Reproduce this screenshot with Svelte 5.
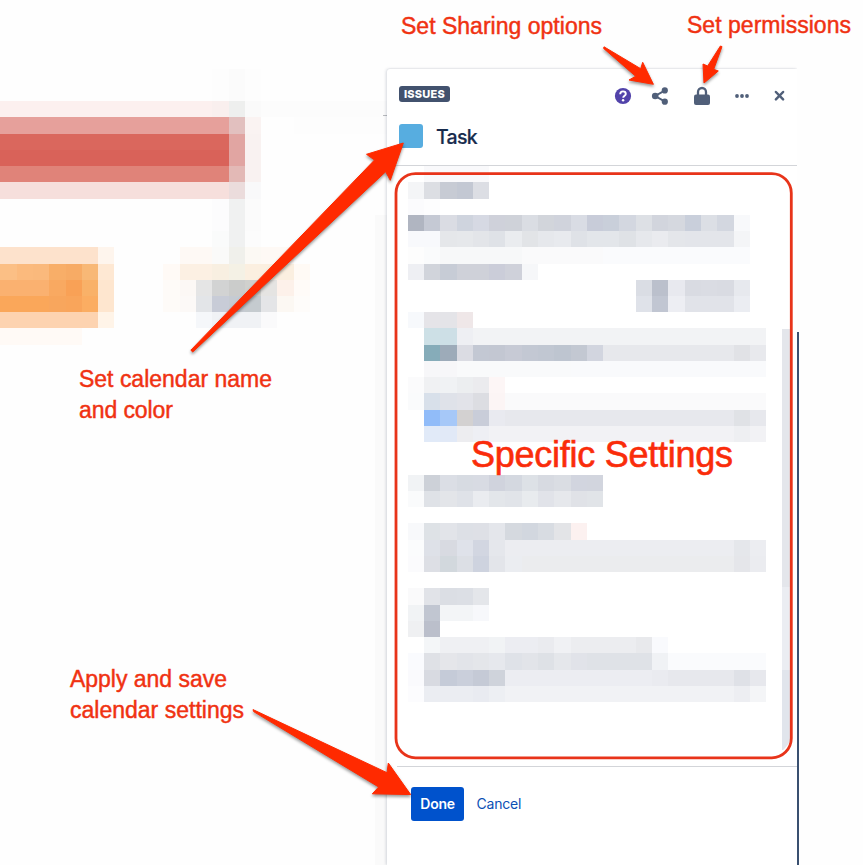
<script>
  // Pixelated cells: x edge = 407.7 + 16.29 * column, y edge = 182.3 + 16.24 * row.
  // Each entry is [row, first column, "colour colour*span ..."].
  const rows = [
    [-7, -12, 'fdfdfd fbfbfb fdfdfd'],
    [-6, -12, 'fdfdfd fbfbfb fdfdfd'],
    [-5, -26, 'fcf0ef*14 f9efee eeefee fafafa fcfcfc*8'],
    [-4, -26, 'e6a09b*15 e2c0bf faf3f2 fefefe*2 fdfdfd*6'],
    [-3, -26, 'da675d*15 e1a5a2 f9f2f1'],
    [-2, -26, 'd96259*15 e1a5a2 f9f2f1'],
    [-1, -26, 'e08379*15 e3b9b6 f9f2f1'],
    [0, -26, 'f6dfdc*15 ebdcdc f9f9fa'],
    [1, -13, 'fefefe fcfcfd f0f1f1 fbfbfb'],
    [2, -12, 'fcfcfd f0f1f1 fbfbfb'],
    [3, -12, 'fafbfb f0f1f1 fcfcfc'],
    [4, -26, 'fde2cc*7 fef5ed fefefe*4 fef9f5*2 fafaf9 f0f0eb fcf9f4 fef9f5*2'],
    [5, -26, 'fbbf85*2 fbba7d fab97c f8ae68 f7ab65 f8b876 fee8d3 fefefe*3 fffaf6 fcf0e3*2 f8efe1 f4f1e5 fbefe0*3 fffaf5'],
    [6, -26, 'fab170*4 f9a961 f9a156 f9b168 fee6cf fefefe*3 fefbf8 fcf8f5 e5e5e5 d2d3d3 cbcccb d0d0cd e5e4e2 fdf1ea fffbf8'],
    [7, -26, 'faa75a*4 f8a65d f9a55b fbad62 fee6cf fefefe*3 fefbf8 fcf9f7 e3e5e8 c8ccd7 c6cbd2 c5cbcf e4e5e7 fcf8f3 fefcfa'],
    [8, -26, 'fdd3b0*7 fff4e8 fefefe*5 f5f7fa f0f2f5*3 fafafb'],
    [9, -26, 'fffaf6*6'],

    [-1, 1, 'f9f9fb*4'],
    [0, 0, 'f4f5f7 dcdee3 c7cbd4 c3c8d3 dcdee4'],
    [1, 0, 'fbfbfd fdfdfe'],
    [2, 0, 'b0b5c1 c5c9d4 dadce3 cfd4de d6d9e3 cfd1da cfd2d9 dadde3 d2d5db d0d3dc d9dce4 c8ccd9 c9cfda d3d7e0 dde0e5 d2d5dd d5d8df c9cfdb dcdfe5 d3d7e0 f8f9fb'],
    [3, 0, 'f8f9fc*2 e5e7ea e6e8eb e3e5e9 dfe2e7 eaecef e2e4e7 e6e8ec e8eaee dfe2e7 e3e6ea*2 dfe2e6 e6e8ec eaebef e4e6ea e3e5ea*3 f4f5f7'],
    [4, 0, 'fdfdfd fafbfc f7f8f9*5 fafafb*5 fafbfd*9'],
    [5, 0, 'eeeff3 d1d4db c7ccd6 cfd1d9*2 cbcdd9 cfd1da f6f7f9'],
    [6, 14, 'dadde4 bbc0cc e8e9ef d9dbe2 dadce3 d9dbe2 e7e9ee'],
    [7, 14, 'dfe2e9 c1c6d2 edeef3 e1e3e9*3 ebedf2'],
    [8, 0, 'f7f9fc e5e4e8 e4e4e8 efe7e8'],
    [9, 1, 'cde0e6 cddfe6 eeeff3 f2f3f5*18'],
    [10, 1, '86acb9 9dabb9 dbdce3 c3c8d3 c3c7d2 c7cad5 c3c8d3 c1c7d2 bec5d0 c3c8d2 d2d5df e7e8ec*8 e1e2e6 e8e9ed'],
    [11, 1, 'f7f7f9*2 f9fafb*7 f9fafc*12'],
    [12, 0, 'fbfbfc f0f1f3 f0f2f4 eceef0 ebebee fdf6f6'],
    [13, 0, 'fafbfc d8e0ea dfe2e9 e2e3e9 dcdde2 fcf5f5 fafafb*16'],
    [14, 1, '91bcf9 a6c8f8 d3d1d1 c9cdd9 e9eaf0 e7e8ed*14 e0e2e6 e7e8ed'],
    [15, 1, 'e1eaf8 e1e9f7 ededf0 eeeff4 f2f2f5*15 eeeff2 f2f2f5'],
    [18, 0, 'f1f3f5 cdd1d8 dbdee5 d7dbe2 d8dbe3 d0d3dd d4d8e0 dde1e6 d7dae1 dadde3 d2d5df d2d5de'],
    [19, 0, 'fafbfc dfe2e7 e3e5e9 dfe2e8 eaecf0 e3e6ea e1e4e9 e8ebee e1e3e9 e6e8ec e0e2e7 e1e4e8'],
    [21, 0, 'f8f9fb dee2e6 e2e4e9 dde0e6 dee0e6 e4e6eb d5d9df d2d7df d8dce2 e3e4e7 fcf1f0'],
    [22, 0, 'fbfcfd dee1e8 d8dae1 dfe2ea d2d6e1 e5e7ec ecedf1*14 e5e7eb ecedf1'],
    [23, 0, 'fbfbfd dddfe5 d2d8dd dcdfe5 ced3df e3e5ea ebedf1 ebecee*13 e5e6ea ebecf0'],
    [25, 0, 'fafafb e1e3e8 dbdee4 dcdfe5 e4e6ea'],
    [26, 0, 'f1f3f5 c1c6d1 f3f5f7*2 f7f8fb'],
    [27, 0, 'eff0f2 bbbfcb'],
    [28, 1, 'f4f6f8 eff0f3*3 f1f3f5 ecedf2*2 eaebef f0f1f4 ecedf0*4 e8e9ec f9fafd'],
    [29, 0, 'fafbfe dfe1e6 e5e6ea e2e4e9 e4e6ea e6e8ed dfe2e8 e2e4e9 dee1e6 e5e7eb e1e3e9 dfe2e7*4 f0f2f5 fafbfd*6'],
    [30, 0, 'fafafd d8dae1 c5cbd8 cacfdb c5cad6 cfd3db ecedf2*9 eaebf0 e7e8ed*4 dfe1e7 e7e8ed'],
    [31, 0, 'fcfcfe ebedf2*3 e9ebf1 edeff3 f1f2f5*14 edeef2 f4f5f7']
  ];

  const px = (c) => Math.round(407.7 + 16.29 * c);
  const py = (r) => Math.round(182.3 + 16.24 * r);

  const cells = rows.flatMap(([r, start, spec]) => {
    let c = start;
    return spec.split(' ').map((part) => {
      const [color, n = 1] = part.split('*');
      const x = px(c);
      c += Number(n);
      return { x, y: py(r), w: px(c) - x, h: py(r + 1) - py(r), fill: '#' + color };
    });
  });
  const timeline = cells.filter((c) => c.x < 387);
  const settings = cells.filter((c) => c.x >= 387);

  const arrows = [
    '190.8,350.2 374.5,160 366.5,154.3 403.3,143 390.3,180.3 385.7,171.7 192.8,351.9',
    '253,709.6 387,772.7 388.3,763 410.7,794.6 372.3,793.8 378.7,787 253.6,711.6',
    '604,46.8 640.7,68.7 642.7,62.3 653.4,84.3 629,80 635.7,76.3 603.6,48.4',
    '720.4,46 722,46.6 713.7,69.3 718.3,71 704,83 703,64 707.7,66'
  ];

  const notes = [
    { x: 401, y: 34, w: 201, text: 'Set Sharing options' },
    { x: 687, y: 33, w: 164, text: 'Set permissions' },
    { x: 79, y: 387, w: 193, text: 'Set calendar name' },
    { x: 79, y: 418, w: 94, text: 'and color' },
    { x: 70, y: 687, w: 157, text: 'Apply and save' },
    { x: 70, y: 718, w: 174, text: 'calendar settings' }
  ];
</script>

<div class="page">
  <svg class="layer" width="863" height="865" shape-rendering="crispEdges" aria-hidden="true">
    <rect x="375" y="215" width="12" height="650" fill="#fafafa" />
    {#each timeline as c}
      <rect x={c.x} y={c.y} width={c.w} height={c.h} fill={c.fill} />
    {/each}
    <rect x="383" y="115" width="4" height="1" fill="#b9bbbf" />
    <rect x="797" y="332" width="2" height="533" fill="#3a5070" />
  </svg>

  <aside class="panel">
    <header>
      <div class="top">
        <span class="lozenge">ISSUES</span>
        <div class="actions">
          <svg width="18" height="18" viewBox="0 0 18 18">
            <circle cx="9" cy="9" r="8.1" fill="#5243aa" />
            <path d="M6.2 7.3C6.2 5.4 7.4 4.4 9 4.4s2.8 1 2.8 2.5c0 1.8-2.6 1.9-2.6 3.9" fill="none" stroke="#fff" stroke-width="1.9" />
            <circle cx="9.1" cy="13.2" r="1.2" fill="#fff" />
          </svg>
          <svg width="18" height="18" viewBox="0 0 18 18" fill="#505f79">
            <path d="M13.6 3.6 4.2 9l9.4 5.4" fill="none" stroke="#505f79" stroke-width="2" />
            <circle cx="13.8" cy="3.4" r="3.1" />
            <circle cx="4.2" cy="9" r="3.3" />
            <circle cx="13.8" cy="14.7" r="3.1" />
          </svg>
          <svg width="18" height="20" viewBox="0 0 18 20">
            <path d="M5 9V6a4 4 0 0 1 8 0V9" fill="none" stroke="#505f79" stroke-width="2.3" />
            <rect x="1" y="8.6" width="16" height="10.4" rx="2" fill="#505f79" />
          </svg>
          <svg width="16" height="6" viewBox="0 0 16 6" fill="#505f79">
            <circle cx="3" cy="3" r="1.9" /><circle cx="8" cy="3" r="1.9" /><circle cx="13" cy="3" r="1.9" />
          </svg>
          <svg width="12" height="12" viewBox="0 0 12 12">
            <path d="m2.9 2 7.2 7.4m0-7.4L2.9 9.4" stroke="#505f79" stroke-width="2.5" stroke-linecap="round" />
          </svg>
        </div>
      </div>
      <div class="title"><span class="swatch"></span><span class="name">Task</span></div>
    </header>
    <div class="body"></div>
    <footer>
      <button class="done">Done</button>
      <button class="cancel">Cancel</button>
    </footer>
  </aside>

  <svg class="layer" width="863" height="865">
    <g shape-rendering="crispEdges">
      {#each settings as c}
        <rect x={c.x} y={c.y} width={c.w} height={c.h} fill={c.fill} />
      {/each}
      <rect x="782" y="329" width="10" height="258" fill="#e4e6eb" />
      <rect x="782" y="587" width="10" height="83" fill="#ebedf2" />
      <rect x="782" y="670" width="10" height="80" fill="#e1e5ec" />
    </g>
    <path d="M782 751q6-5 10-13v17h-10z" fill="#fff" />
    <rect x="396" y="173.6" width="395.3" height="584.2" rx="19.5" fill="none" stroke="#e8341a" stroke-width="2.8" />
    <g class="arrows">
      {#each arrows as points}
        <polygon {points} />
      {/each}
    </g>
    {#each notes as n}
      <text x={n.x} y={n.y} textLength={n.w} font-size="23">{n.text}</text>
    {/each}
    <text class="big" x="471" y="467" textLength="262" font-size="36">Specific Settings</text>
  </svg>
</div>

<style>
  :global(body) { margin: 0; background: #fff; }
  .page {
    position: relative;
    width: 863px;
    height: 865px;
    overflow: hidden;
    background: #fefefe;
    font-family: Inter, "Liberation Sans", sans-serif;
  }
  .layer { position: absolute; left: 0; top: 0; display: block; }
  .panel {
    position: relative;
    box-sizing: border-box;
    display: flex;
    flex-direction: column;
    width: 410px;
    height: 796px;
    margin: 69px 0 0 387px;
    background: #fff;
    border-radius: 3px 0 0 0;
    box-shadow: -1px 0 3px rgba(9, 30, 66, 0.17), 0 -1px 1px rgba(9, 30, 66, 0.03);
    clip-path: inset(-4px 0 0 -8px);
  }
  header {
    box-sizing: border-box;
    height: 97px;
    padding: 17px 12px 0;
    border-bottom: 1px solid #d3d5d9;
  }
  .top { display: flex; justify-content: space-between; height: 38px; }
  .lozenge {
    box-sizing: border-box;
    width: 51px;
    height: 16px;
    border-radius: 3px;
    background: #42526e;
    color: #fff;
    font-size: 11px;
    font-weight: 800;
    line-height: 16px;
    text-align: center;
    letter-spacing: 0.25px;
  }
  .actions { display: flex; align-items: center; height: 20px; }
  .actions svg { display: block; flex: none; }
  .actions svg:nth-child(2) { margin-left: 19px; }
  .actions svg:nth-child(3) { margin-left: 24px; }
  .actions svg:nth-child(4) { margin-left: 23px; }
  .actions svg:nth-child(5) { margin-left: 23px; }
  .title { display: flex; align-items: center; gap: 13px; height: 24px; }
  .swatch { width: 24px; height: 24px; border-radius: 3px; background: #57ade0; }
  .name { padding-top: 2px; color: #172b4d; font-size: 19.5px; font-weight: 500; line-height: 24px; letter-spacing: -0.7px; -webkit-text-stroke: 0.2px #172b4d; }
  .body { height: 600px; }
  footer {
    display: flex;
    align-items: center;
    gap: 12.5px;
    margin-left: 10px;
    height: 34px;
    padding: 20px 0 0 14px;
    border-top: 1px solid #d3d5d9;
  }
  button {
    padding: 0;
    border: 0;
    background: none;
    font: 500 14px/34px Inter, "Liberation Sans", sans-serif;
    height: 34px;
  }
  .done { width: 53px; border-radius: 3px; background: #0052cc; color: #fff; font-weight: 600; letter-spacing: -0.3px; }
  .cancel { color: #0c50b5; font-weight: 400; letter-spacing: -0.2px; }
  .arrows {
    fill: #ff2a00;
    stroke: #ff2a00;
    stroke-width: 1;
    stroke-linejoin: round;
    filter: drop-shadow(0 2px 1.5px rgba(0, 0, 0, 0.4));
  }
  text {
    fill: #f03212;
    stroke: #f03212;
    stroke-width: 0.45;
    font-family: "Liberation Sans", Arial, sans-serif;
  }
  .big { fill: #fa2c0a; stroke: #fa2c0a; stroke-width: 0.6; }
</style>
